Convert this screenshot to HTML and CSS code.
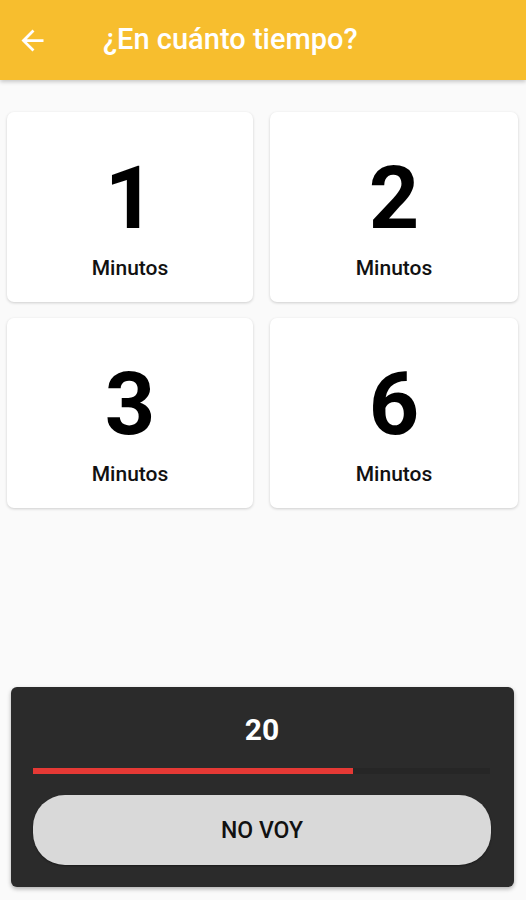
FILE: index.html
```html
<!DOCTYPE html>
<html>

<head>
  <meta charset="utf-8">
  <title>¿En cuánto tiempo?</title>
  <link rel="stylesheet" href="styles.css">
</head>

<body>
  <header class="app-bar">
    <svg class="back-icon" width="24" height="24" viewBox="0 0 24 24">
      <path d="M20 11H7.83l5.59-5.59L12 4l-8 8 8 8 1.41-1.41L7.83 13H20v-2z" fill="#fff"/>
    </svg>
    <h1>¿En cuánto tiempo?</h1>
  </header>

  <div class="options">
    <div class="option">
      <span class="number">1</span>
      <span class="label">Minutos</span>
    </div>
    <div class="option">
      <span class="number">2</span>
      <span class="label">Minutos</span>
    </div>
    <div class="option">
      <span class="number">3</span>
      <span class="label">Minutos</span>
    </div>
    <div class="option">
      <span class="number">6</span>
      <span class="label">Minutos</span>
    </div>
  </div>

  <div class="countdown">
    <div class="count">20</div>
    <div class="progress">
      <div class="progress-fill" style="width: 70%"></div>
    </div>
    <button class="cancel-btn">NO VOY</button>
  </div>
</body>

</html>
```

FILE: styles.css
```css
body {
  font-family: Roboto, 'Noto Sans', sans-serif;
  background-color: #fafafa;
  margin: 0;
  padding: 0;
  width: 526px;
  height: 900px;
  display: flex;
  flex-direction: column;
  overflow: hidden;
}

.app-bar {
  height: 80px;
  background-color: #f7be2e;
  display: flex;
  align-items: center;
  padding-left: 16px;
  box-shadow: 0 2px 4px rgba(0, 0, 0, 0.2);
  flex-shrink: 0;
}

.back-icon {
  width: 33px;
  height: 33px;
}

.app-bar h1 {
  margin: 0 0 2px 54px;
  font-size: 29px;
  font-weight: 500;
  color: #fff;
}

.options {
  display: grid;
  grid-template-columns: 246px 248px;
  grid-auto-rows: 190px;
  column-gap: 17px;
  row-gap: 16px;
  padding: 32px 8px 0 7px;
}

.option {
  background-color: #fff;
  border-radius: 7px;
  box-shadow: 0 1px 3px rgba(0, 0, 0, 0.18);
  display: flex;
  flex-direction: column;
  align-items: center;
}

.number {
  font-size: 88px;
  font-weight: 700;
  color: #000;
  line-height: 1;
  margin-top: 42px;
}

.label {
  font-size: 21px;
  font-weight: 500;
  color: #111;
  margin-top: 14px;
}

.countdown {
  margin: auto 12px 13px 11px;
  background-color: #2b2b2b;
  border-radius: 6px;
  box-shadow: 0 2px 4px rgba(0, 0, 0, 0.3);
  padding: 27px 23px 22px 22px;
  display: flex;
  flex-direction: column;
}

.count {
  text-align: center;
  color: #fff;
  font-size: 30px;
  font-weight: 700;
  line-height: 32px;
}

.progress {
  margin: 22px 0 0;
  height: 6px;
  width: 457px;
  background-color: #262626;
}

.progress-fill {
  height: 100%;
  background-color: #e53935;
}

.cancel-btn {
  margin-top: 21px;
  width: 458px;
  height: 70px;
  border: none;
  border-radius: 32px;
  background-color: #d9d9d9;
  font-family: Roboto, 'Noto Sans', sans-serif;
  font-size: 23px;
  font-weight: 500;
  color: #111;
  box-shadow: 0 1px 2px rgba(0, 0, 0, 0.4);
}
```
